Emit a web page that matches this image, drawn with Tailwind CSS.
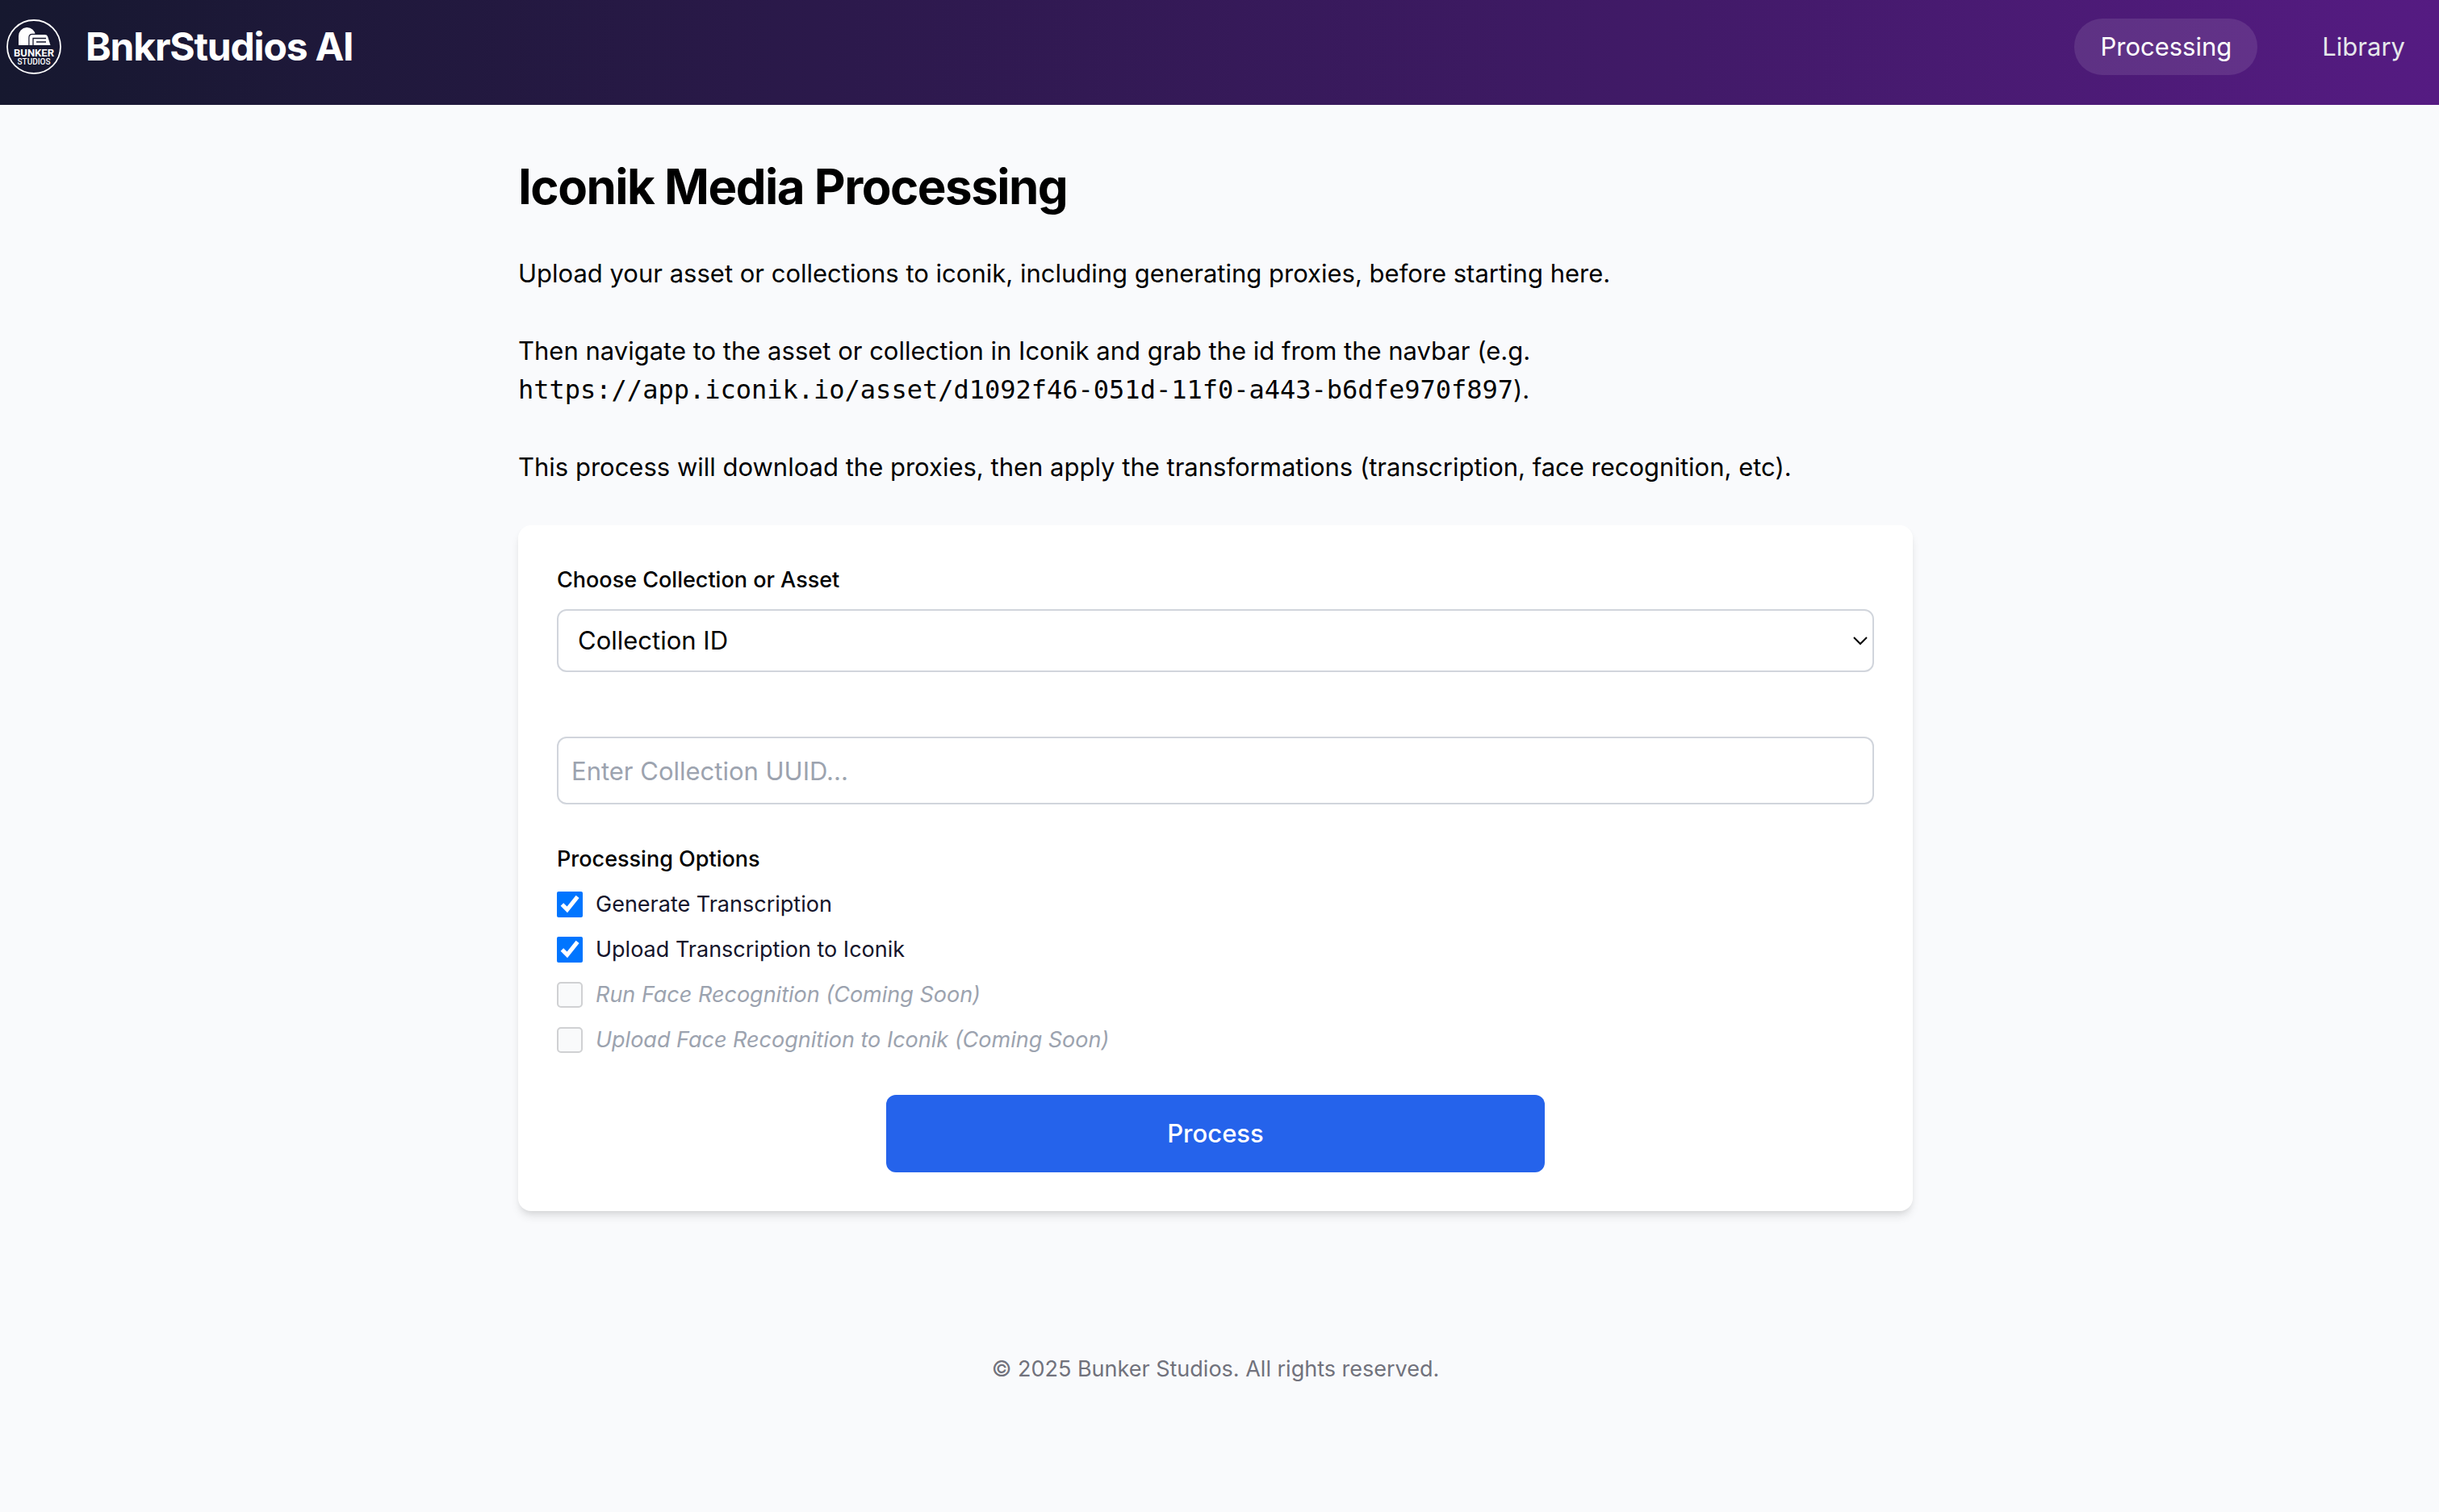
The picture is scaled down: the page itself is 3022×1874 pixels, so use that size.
<!DOCTYPE html>
<html lang="en">

<head>
    <meta charset="UTF-8">
    <meta name="viewport" content="width=device-width, initial-scale=1.0">
    <title>BnkrStudios AI</title>
    <script src="https://cdn.jsdelivr.net/npm/@tailwindcss/browser@4"></script>
</head>

<body class="bg-[#f9fafc] min-h-screen text-black text-[31px] leading-[48px] font-[Inter,sans-serif]">
    <header class="h-[130px] bg-linear-to-r/srgb from-[#16182f] to-[#551b82] pl-2 pr-2.5 pt-[23px] flex items-start justify-between">
        <div class="flex items-center gap-[30px] h-[70px]">
            <svg class="size-[68px]" viewBox="0 0 68 68" role="img" aria-label="Bunker Studios">
                <circle cx="34" cy="34" r="33" fill="none" stroke="#fff" stroke-width="1.8" />
                <path d="M15 32V21a10.5 10.5 0 0 1 21-1v12z" fill="#fff" />
                <path d="M28.500 32V22.500q0-3.500 3.500-3.500h15.500q3 0 3.700 2.400L54.500 32z" fill="#fff" stroke="#16182f" stroke-width="2.400" paint-order="stroke" />
                <path d="M33 32V23.500h16M37 28h12" stroke="#16182f" stroke-width="1.300" fill="none" />
                <text x="34" y="45.500" text-anchor="middle" class="font-[Roboto,sans-serif] font-bold text-[13px] fill-white">BUNKER</text>
                <text x="34" y="56" text-anchor="middle" class="font-[Roboto,sans-serif] font-medium text-[10px] fill-white">STUDIOS</text>
            </svg>
            <span class="text-[48px] font-bold text-white tracking-tight">BnkrStudios AI</span>
        </div>
        <nav class="flex gap-12">
            <a href="#" class="h-[70px] px-8 flex items-center rounded-full bg-white/10 text-white">Processing</a>
            <a href="#" class="h-[70px] px-8 flex items-center rounded-full text-[#e5e7eb]">Library</a>
        </nav>
    </header>

    <div class="pr-2.5">
        <main class="w-full max-w-[1728px] mx-auto pt-[65px]">
            <h1 class="text-[60px] leading-[72px] font-bold tracking-tight mb-12">Iconik Media Processing</h1>
            <p class="mb-12">Upload your asset or collections to iconik, including generating proxies, before starting here.</p>
            <p class="mb-12">Then navigate to the asset or collection in Iconik and grab the id from the navbar (e.g.<br>
                <code class="text-[32px] font-['DejaVu_Sans_Mono',monospace]">https://app.iconik.io/asset/d1092f46-051d-11f0-a443-b6dfe970f897</code>).</p>
            <p class="mb-12">This process will download the proxies, then apply the transformations (transcription, face recognition, etc).</p>

            <form class="bg-white rounded-2xl p-12 shadow-[0_8px_12px_-2px_rgb(0_0_0/0.1),0_4px_8px_-4px_rgb(0_0_0/0.1)]">
                <label for="idType" class="block text-[27px] leading-10 font-medium mb-4">Choose Collection or Asset</label>
                <div class="relative mb-20">
                    <select id="idType" class="appearance-none block w-full h-[78px] border-2 border-gray-300 rounded-xl px-6 bg-white">
                        <option>Collection ID</option>
                        <option>Asset ID</option>
                    </select>
                    <svg class="absolute right-2 top-[34px] w-[18px] h-[11px] pointer-events-none" viewBox="0 0 18 11" fill="none" stroke="#000" stroke-width="2">
                        <path d="M1 1l8 8 8-8" />
                    </svg>
                </div>

                <input type="text" aria-label="Collection UUID" placeholder="Enter Collection UUID..."
                    class="block w-full h-[84px] border-2 border-gray-300 rounded-xl px-4 mb-12 placeholder:text-[#9ca3af]">

                <fieldset class="text-[27px] leading-10 text-[#14142b] mb-12">
                    <legend class="font-medium text-black mb-4">Processing Options</legend>
                    <div class="flex flex-col gap-4">
                        <label class="flex items-center gap-4">
                            <input type="checkbox" checked class="size-8 accent-[#0075ff]">
                            Generate Transcription
                        </label>
                        <label class="flex items-center gap-4">
                            <input type="checkbox" checked class="size-8 accent-[#0075ff]">
                            Upload Transcription to Iconik
                        </label>
                        <label class="flex items-center gap-4 italic text-[#9ca3af]">
                            <input type="checkbox" disabled class="size-8 appearance-none rounded-[5px] border-2 border-[#d0d1d3] bg-[#f9fafb]">
                            Run Face Recognition (Coming Soon)
                        </label>
                        <label class="flex items-center gap-4 italic text-[#9ca3af]">
                            <input type="checkbox" disabled class="size-8 appearance-none rounded-[5px] border-2 border-[#d0d1d3] bg-[#f9fafb]">
                            Upload Face Recognition to Iconik (Coming Soon)
                        </label>
                    </div>
                </fieldset>

                <button type="button" class="block w-1/2 h-24 mx-auto bg-[#2563eb] rounded-xl text-white font-medium">Process</button>
            </form>
        </main>

        <footer class="pt-44 text-center text-[27px] leading-10 text-[#71727c]">
            © 2025 Bunker Studios. All rights reserved.
        </footer>
    </div>
</body>

</html>
